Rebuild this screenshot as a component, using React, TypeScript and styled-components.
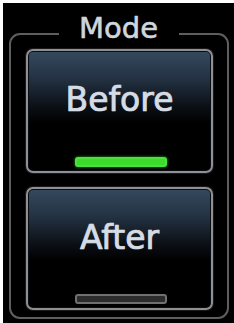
import React, { useState } from "react";
import styled, { createGlobalStyle } from "styled-components";

const GlobalStyle = createGlobalStyle`
  html, body {
    margin: 0;
    padding: 0;
    background: #ffffff;
  }
`;

// Black display area
const Screen = styled.div`
  box-sizing: border-box;
  margin: 3px 0 0 3px;
  width: 231px;
  height: 320px;
  padding: 30px 5px 4px 6px;
  background: #000000;
  font-family: "DejaVu Sans", Verdana, sans-serif;
`;

// Rounded group frame
const Frame = styled.div`
  position: relative;
  box-sizing: border-box;
  height: 286px;
  border: 2px solid #5e5e5e;
  border-radius: 11px;
  padding: 14px 14px 7px 15px;
  display: flex;
  flex-direction: column;
  gap: 14px;
`;

// Title sits over the top border line
const FrameTitle = styled.span`
  position: absolute;
  top: -22px;
  left: 50%;
  transform: translateX(-50%);
  padding: 0 21px 0 20px;
  background: #000000;
  color: #cfd6dd;
  font-size: 29px;
  line-height: 30px;
  white-space: nowrap;
  -webkit-text-stroke: 0.6px #cfd6dd;
`;

const ModeButton = styled.button<{ $tall?: boolean }>`
  box-sizing: border-box;
  height: ${(p) => (p.$tall ? 124 : 123)}px;
  width: 100%;
  border: 2px solid #8e9094;
  border-radius: 7px;
  box-shadow: 0 0 0 1px #1a1a1a, inset 0 0 0 1px #0a0d12;
  background: linear-gradient(
    to bottom,
    #35495e 0%,
    #243344 22%,
    #0b0f14 47%,
    #000000 60%,
    #000000 100%
  );
  padding: 32px 0 4px;
  display: flex;
  flex-direction: column;
  align-items: center;
  cursor: pointer;
  font-family: inherit;
`;

const Label = styled.span`
  color: #d5dce4;
  font-size: 33px;
  line-height: 33px;
  -webkit-text-stroke: 0.7px #d5dce4;
  text-shadow: 0 0 1px rgba(210, 220, 230, 0.6);
`;

const Indicator = styled.span<{ $on: boolean }>`
  box-sizing: border-box;
  margin-top: auto;
  margin-left: 3px;
  width: 92px;
  height: 10px;
  border-radius: 3px;
  background: ${(p) => (p.$on ? "#3bdc2b" : "#2c2c2c")};
  border: 2px solid ${(p) => (p.$on ? "#4ae23c" : "#707070")};
  box-shadow: ${(p) => (p.$on ? "0 0 3px rgba(70, 230, 50, 0.7)" : "none")};
`;

const modes = ["Before", "After"];

export default function App() {
  const [active, setActive] = useState("Before");

  return (
    <>
      <GlobalStyle />
      <Screen>
        <Frame>
          <FrameTitle>Mode</FrameTitle>
          {modes.map((m, i) => (
            <ModeButton key={m} $tall={i === 0} onClick={() => setActive(m)}>
              <Label>{m}</Label>
              <Indicator $on={active === m} />
            </ModeButton>
          ))}
        </Frame>
      </Screen>
    </>
  );
}
